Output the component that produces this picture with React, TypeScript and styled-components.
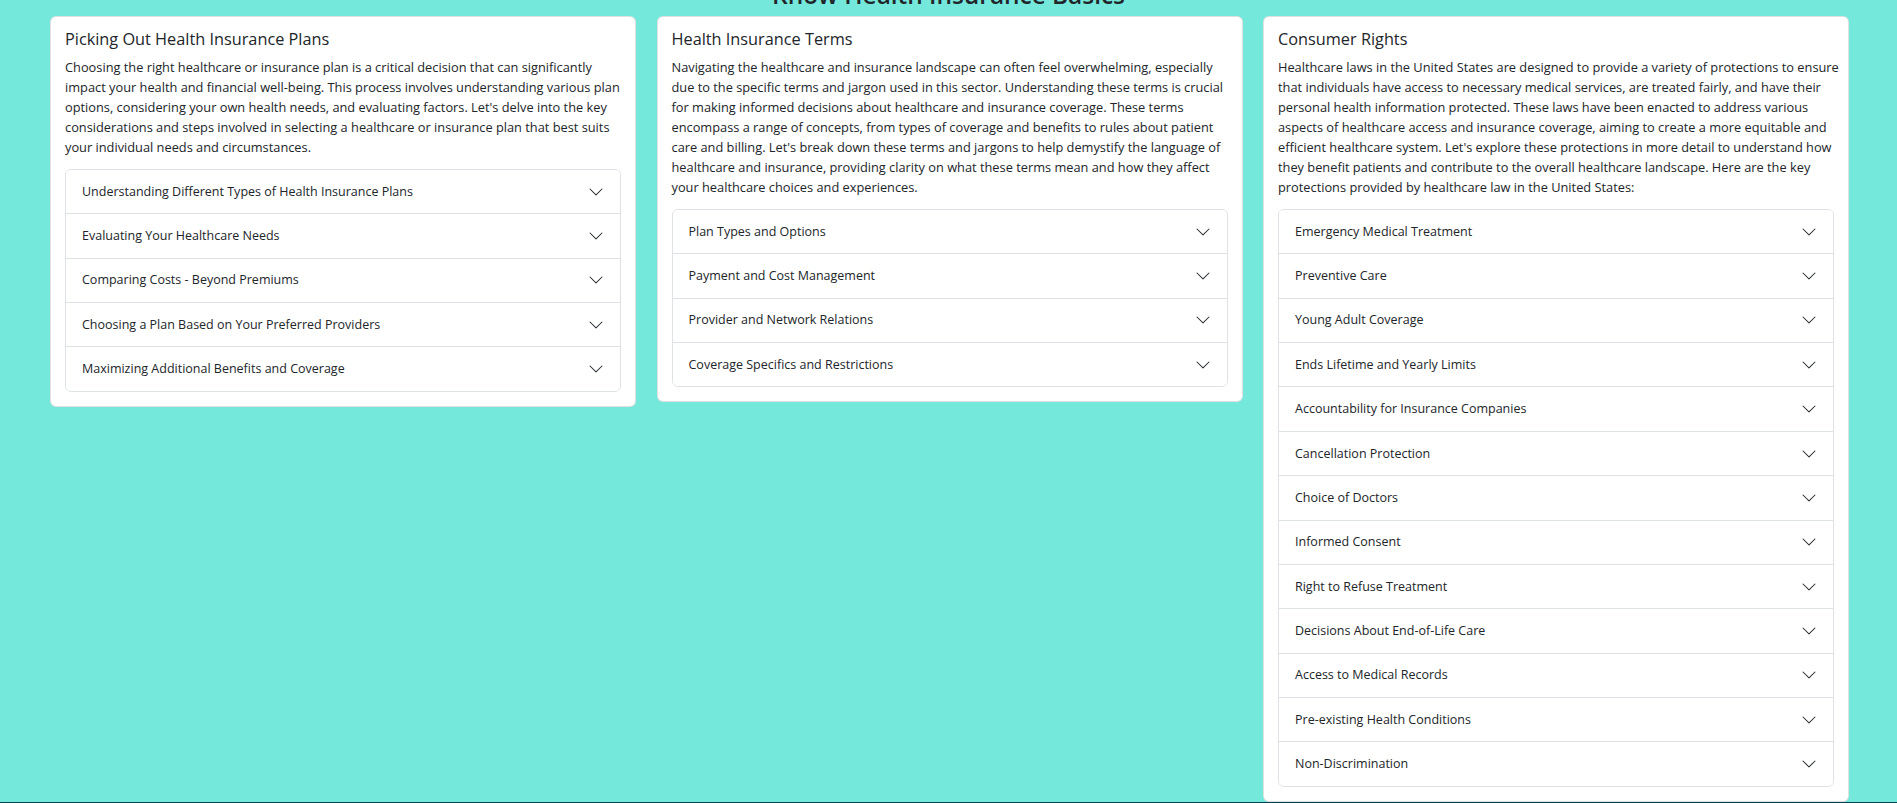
import React from "react";
import styled, { createGlobalStyle } from "styled-components";

const sections = [
  {
    title: "Picking Out Health Insurance Plans",
    text: [
      "Choosing the right healthcare or insurance plan is a critical decision that can significantly",
      "impact your health and financial well-being. This process involves understanding various plan",
      "options, considering your own health needs, and evaluating factors. Let's delve into the key",
      "considerations and steps involved in selecting a healthcare or insurance plan that best suits",
      "your individual needs and circumstances.",
    ],
    items: [
      "Understanding Different Types of Health Insurance Plans",
      "Evaluating Your Healthcare Needs",
      "Comparing Costs - Beyond Premiums",
      "Choosing a Plan Based on Your Preferred Providers",
      "Maximizing Additional Benefits and Coverage",
    ],
  },
  {
    title: "Health Insurance Terms",
    text: [
      "Navigating the healthcare and insurance landscape can often feel overwhelming, especially",
      "due to the specific terms and jargon used in this sector. Understanding these terms is crucial",
      "for making informed decisions about healthcare and insurance coverage. These terms",
      "encompass a range of concepts, from types of coverage and benefits to rules about patient",
      "care and billing. Let's break down these terms and jargons to help demystify the language of",
      "healthcare and insurance, providing clarity on what these terms mean and how they affect",
      "your healthcare choices and experiences.",
    ],
    items: [
      "Plan Types and Options",
      "Payment and Cost Management",
      "Provider and Network Relations",
      "Coverage Specifics and Restrictions",
    ],
  },
  {
    title: "Consumer Rights",
    text: [
      "Healthcare laws in the United States are designed to provide a variety of protections to ensure",
      "that individuals have access to necessary medical services, are treated fairly, and have their",
      "personal health information protected. These laws have been enacted to address various",
      "aspects of healthcare access and insurance coverage, aiming to create a more equitable and",
      "efficient healthcare system. Let's explore these protections in more detail to understand how",
      "they benefit patients and contribute to the overall healthcare landscape. Here are the key",
      "protections provided by healthcare law in the United States:",
    ],
    items: [
      "Emergency Medical Treatment",
      "Preventive Care",
      "Young Adult Coverage",
      "Ends Lifetime and Yearly Limits",
      "Accountability for Insurance Companies",
      "Cancellation Protection",
      "Choice of Doctors",
      "Informed Consent",
      "Right to Refuse Treatment",
      "Decisions About End-of-Life Care",
      "Access to Medical Records",
      "Pre-existing Health Conditions",
      "Non-Discrimination",
    ],
  },
];

const GlobalStyle = createGlobalStyle`
  html, body {
    margin: 0;
    padding: 0;
  }
  body {
    background: #75e8dc;
    color: #212529;
    font-family: "Open Sans", "Noto Sans", sans-serif;
    overflow: hidden;
  }
`;

const Page = styled.div`
  display: flex;
  flex-direction: column;
`;

const Heading = styled.h2`
  margin: -19.3px 0 7.7px;
  font-size: 24.4px;
  font-weight: 600;
  line-height: 27.6px;
  text-align: center;
`;

const Columns = styled.main`
  display: grid;
  grid-template-columns: repeat(3, minmax(0, 1fr));
  gap: 20.5px;
  align-items: start;
  margin: 0 48px 0 50px;
`;

const Card = styled.section`
  background: #fff;
  border: 1px solid rgba(0, 0, 0, 0.12);
  border-radius: 6px;
  padding: 12px 14px 14px;
`;

const CardTitle = styled.h5`
  margin: 0 0 8px;
  font-size: 16.3px;
  font-weight: 500;
  line-height: 20px;
`;

const CardText = styled.p`
  margin: 0 0 12px;
  font-size: 12.8px;
  line-height: 20px;
`;

const TextLine = styled.span`
  display: block;
  white-space: nowrap;
`;

const Accordion = styled.div`
  border: 1px solid #dee2e6;
  border-radius: 6px;
  overflow: hidden;
`;

const ItemButton = styled.button`
  display: flex;
  align-items: center;
  justify-content: space-between;
  width: 100%;
  padding: 11.7px 16px;
  border: 0;
  border-top: 1px solid #dee2e6;
  background: #fff;
  color: #212529;
  font-family: inherit;
  font-size: 12.5px;
  line-height: 20px;
  text-align: left;
  cursor: pointer;

  &:first-child {
    border-top: 0;
  }
`;

const Chevron = styled.svg`
  flex: none;
  width: 16px;
  height: 16px;
  color: #212529;
`;

const Footer = styled.footer`
  height: 40px;
  background: #024152;
`;

const ChevronIcon = () => (
  <Chevron viewBox="0 0 16 16" fill="currentColor" aria-hidden="true">
    <path
      fillRule="evenodd"
      d="M1.646 4.646a.5.5 0 0 1 .708 0L8 10.293l5.646-5.647a.5.5 0 0 1 .708.708l-6 6a.5.5 0 0 1-.708 0l-6-6a.5.5 0 0 1 0-.708z"
    />
  </Chevron>
);

export default function App() {
  return (
    <Page>
      <GlobalStyle />
      <Heading>Know Health Insurance Basics</Heading>
      <Columns>
        {sections.map((s) => (
          <Card key={s.title}>
            <CardTitle>{s.title}</CardTitle>
            <CardText>
              {s.text.map((line) => (
                <TextLine key={line}>{line}</TextLine>
              ))}
            </CardText>
            <Accordion>
              {s.items.map((item) => (
                <ItemButton key={item} type="button">
                  <span>{item}</span>
                  <ChevronIcon />
                </ItemButton>
              ))}
            </Accordion>
          </Card>
        ))}
      </Columns>
      <Footer />
    </Page>
  );
}
